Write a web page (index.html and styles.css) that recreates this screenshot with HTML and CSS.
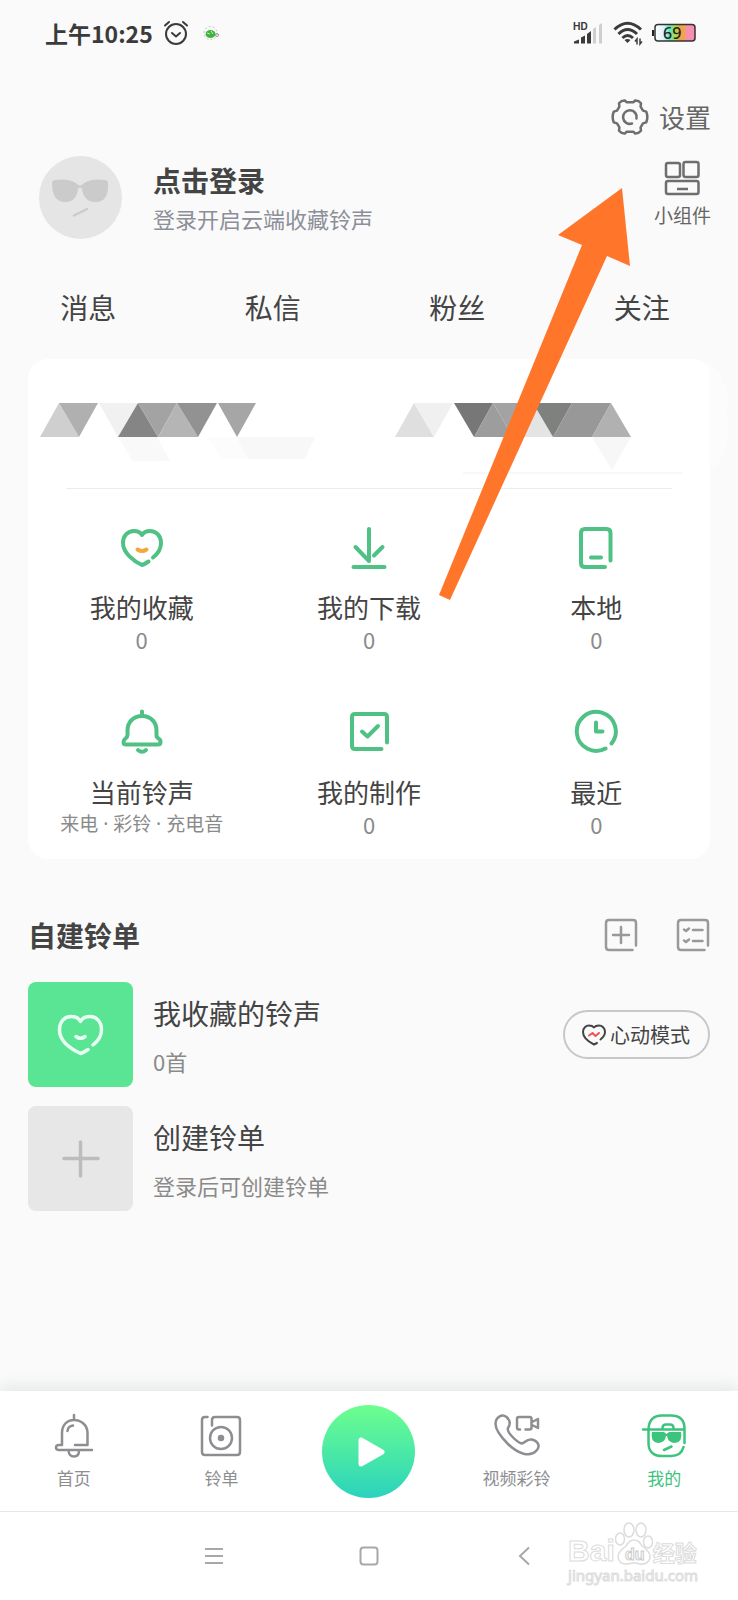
FILE: index.html
```html
<!DOCTYPE html>
<html lang="zh-CN">
<head>
<meta charset="utf-8">
<meta name="viewport" content="width=device-width, initial-scale=1">
<title>我的</title>
<link rel="stylesheet" href="styles.css">
</head>
<body>
<header class="status">
  <span class="status-time">上午10:25</span>
  <svg class="status-alarm" width="26" height="26" viewBox="0 0 26 26" fill="none" stroke="#3b3b3b" stroke-width="2" stroke-linecap="round" stroke-linejoin="round"><circle cx="13" cy="14" r="10"/><path d="M9 13l4 3.500 4-3.500M2 5.500l4-3.500M24 5.500l-4-3.500"/></svg>
  <svg class="status-app" width="16" height="16" viewBox="0 0 16 16"><circle cx="7.500" cy="8" r="6.500" fill="none" stroke="#b9c4b9" stroke-dasharray="2 2"/><ellipse cx="7.500" cy="9" rx="5" ry="4" fill="#3cb43c"/><path d="M4 8l3 1M8 6l2 3" stroke="#caf0ca"/><circle cx="14" cy="10" r="1.500" fill="none" stroke="#999"/></svg>
  <svg class="status-signal" width="30" height="24" viewBox="0 0 30 24"><text x="0" y="9" font-family="Inter, sans-serif" font-size="10" font-weight="700" fill="#3b3b3b">HD</text><path d="M1 22.500v-2l5-2v4zM8 22.500v-6l4-2v8zM14 22.500V13l4-3v12.500z" fill="#3b3b3b"/><path d="M20 22.500V8l3-2v16.500zM26 22.500V4l3-2v20.500z" fill="#cfcfcf"/></svg>
  <svg class="status-wifi" width="30" height="26" viewBox="0 0 30 26" fill="none" stroke="#3b3b3b" stroke-width="3"><path d="M1.500 9.500Q14.500-3 28 9.500M5.500 14Q14.500 5 24 14M9.500 18Q14.500 13 20 18"/><path d="M11.500 20q3-2 6 0l-3 3z" fill="#3b3b3b" stroke="none"/><path d="M24 24.500V19l-2 2.500M27 18.500V24l2-2.500" stroke-width="1.500"/></svg>
  <svg width="46" height="20" viewBox="0 0 46 20"><defs><linearGradient id="battery"><stop offset="0" stop-color="#fff"/><stop offset=".22" stop-color="#d9f3ff"/><stop offset=".36" stop-color="#5ee8c0"/><stop offset=".5" stop-color="#a6e04a"/><stop offset=".62" stop-color="#f0a53a"/><stop offset=".75" stop-color="#f3a060"/><stop offset=".8" stop-color="#f58fb4"/><stop offset="1" stop-color="#f58fb4"/></linearGradient></defs><rect x="4" y="1.500" width="40" height="16.500" rx="3" fill="url(#battery)" stroke="#333" stroke-width="1.500"/><path d="M3 7h-2v6h2z" fill="#222"/><text x="12" y="16" font-family="Noto Sans, sans-serif" font-size="16" font-weight="500" fill="#222">69</text></svg>
</header>

<main class="content">
  <div class="toolbar">
    <button class="settings">
      <svg width="40" height="40" viewBox="0 0 40 40" fill="none" stroke="#6e6e6e" stroke-width="2.500" stroke-linejoin="round" stroke-linecap="round"><path d="M16.500 5.200H23.500L25.200 3.400Q28.500 3.200 31 6.200L30.600 9.600L33 13.600L36.200 14.600Q38.500 20 36.200 25.400L33 26.400L30.600 30.400L31 33.800Q28.500 36.800 25.200 36.600L23.500 34.800H16.500L14.800 36.600Q11.500 36.800 9 33.800L9.400 30.400L7 26.400L3.800 25.400Q1.500 20 3.800 14.600L7 13.600L9.400 9.600L9 6.200Q11.500 3.200 14.800 3.400Z"/><path d="M26.500 21.500A6.800 6.800 0 1 0 22 26.500"/></svg>
      <span>设置</span>
    </button>
  </div>

  <section class="profile">
    <svg class="avatar" viewBox="0 0 83 83"><circle cx="41.500" cy="41.500" r="41.500" fill="#e5e5e5"/><path d="M13 27Q13 24 17 24Q29 22 37 27Q41 32 45 27Q53 22 65 24Q69 24 69 27Q70 45 58 46Q45 47 43 33Q41 30 39 33Q37 47 25 46Q13 45 13 27Z" fill="#cbcbcb"/><path d="M35 59.500L48 53" stroke="#cbcbcb" stroke-width="2.500" stroke-linecap="round"/></svg>
    <a class="login" href="#login">
      <strong class="login-title">点击登录</strong>
      <span class="login-note">登录开启云端收藏铃声</span>
    </a>
    <button class="widget">
      <svg width="36" height="36" viewBox="0 0 36 36" fill="none" stroke="#6e6e6e" stroke-width="2.500"><rect x="2" y="3" width="14" height="14" rx="2"/><rect x="19.500" y="2" width="15" height="15" rx="2"/><rect x="2" y="21" width="32.500" height="13" rx="2"/><path d="M13 29h11"/></svg>
      <span>小组件</span>
    </button>
  </section>

  <nav class="tabs">
    <a href="#messages">消息</a><a href="#chat">私信</a><a href="#fans">粉丝</a><a href="#following">关注</a>
  </nav>

  <section class="card">
    <svg class="mosaic" viewBox="0 0 682 85">
      <path d="M665-38Q688-46 694-22Q704-10 698 12Q706 30 690 62L665 72Z" fill="#fcfcfc"/>
      <path d="M640-44H662Q682-44 682-24V85H640Z" fill="#fff"/>
      <path d="M12 34L31 0L51 34Z" fill="#cfcfcf"/><path d="M31 0H70L51 34Z" fill="#b0b0b0"/>
      <path d="M71 0H110L90 34Z" fill="#f1f1f1"/><path d="M90 34L110 0L130 34Z" fill="#858585"/>
      <path d="M110 0H149L130 34Z" fill="#a3a3a3"/><path d="M130 34L149 0L170 34Z" fill="#b5b5b5"/>
      <path d="M149 0H189L170 34Z" fill="#929292"/><path d="M190 0H228L209 34Z" fill="#a6a6a6"/>
      <path d="M90 34H129L142 58H105Z" fill="#f9f9f9"/><path d="M208 34H287L277 56H220Z" fill="#f8f8f8"/><path d="M180 34H208L220 56H194Z" fill="#fcfcfc"/>
      <path d="M367 34L386 0L406 34Z" fill="#dfdfdf"/><path d="M386 0H425L406 34Z" fill="#f0f0f0"/>
      <path d="M426 0H465L446 34Z" fill="#777"/><path d="M446 34L465 0L485 34Z" fill="#9d9d9d"/>
      <path d="M465 0H505L485 34Z" fill="#a3a3a3"/><path d="M485 34L505 0L525 34Z" fill="#e4e4e4"/>
      <path d="M505 0H544L525 34Z" fill="#7e817e"/><path d="M525 34L544 0H583L564 34Z" fill="#989898"/>
      <path d="M564 34L583 0L603 34Z" fill="#b1b1b1"/><path d="M564 34H603L584 67Z" fill="#f7f7f7"/>
      <path d="M435 70H655" stroke="#f8f8f8" stroke-width="2"/>
    </svg>
    <hr class="rule">
    <ul class="grid">
      <li><a class="tile" href="#favorites">
        <svg class="icon" viewBox="0 0 48 48"><path d="M35 33.500C39.500 30 43 25.500 43 19C43 11.500 38 7 32 7C28.500 7 25.500 8.500 24 11C22.500 8.500 19.500 7 16 7C10 7 5 11.500 5 19C5 29 16 37.500 24 41Q27 40 30.500 37.500"/><path d="M19.500 25.500Q24 28.500 28.500 25.500" stroke="#f0a93f"/></svg>
        <span class="tile-name">我的收藏</span><span class="tile-count">0</span></a></li>
      <li><a class="tile" href="#downloads">
        <svg class="icon" viewBox="0 0 48 48"><path d="M8.500 43H39.500M24 5V37L10.500 23M37.500 23L29 31.500"/></svg>
        <span class="tile-name">我的下载</span><span class="tile-count">0</span></a></li>
      <li><a class="tile" href="#local">
        <svg class="icon" viewBox="0 0 48 48"><path d="M38.500 36.500V9Q38.500 5 34.500 5H13Q9 5 9 9V39Q9 43 13 43H33M19 33.500H29"/></svg>
        <span class="tile-name">本地</span><span class="tile-count">0</span></a></li>
      <li><a class="tile" href="#current">
        <svg class="icon" viewBox="0 0 48 48"><path d="M24 2.500V7M24 7C15 7 9.500 13.500 9.500 21.500V26Q9.500 28 7.500 29.500T5.500 33Q5.500 35.500 8 35.500H40Q42.500 35.500 42.500 33T40.500 29.500T38.500 26V21.500C38.500 13.500 33 7 24 7ZM20 41Q24 44.500 28 41"/></svg>
        <span class="tile-name">当前铃声</span><span class="tile-note">来电 · 彩铃 · 充电音</span></a></li>
      <li><a class="tile" href="#made">
        <svg class="icon" viewBox="0 0 48 48"><path d="M42 33.500V8Q42 5 39 5H10Q7 5 7 8V37Q7 40 10 40H36.500M17 22.500L22.500 27.500L33 17"/></svg>
        <span class="tile-name">我的制作</span><span class="tile-count">0</span></a></li>
      <li><a class="tile" href="#recent">
        <svg class="icon" viewBox="0 0 48 48"><path d="M39.500 34.500A19.500 19.500 0 1 0 33.500 39.500M24 13.500V22.500H30.500"/></svg>
        <span class="tile-name">最近</span><span class="tile-count">0</span></a></li>
    </ul>
  </section>

  <section class="lists">
    <div class="lists-head">
      <h2>自建铃单</h2>
      <button aria-label="新建铃单"><svg width="34" height="34" viewBox="0 0 34 34" fill="none" stroke="#999" stroke-width="2.500" stroke-linecap="round"><path d="M32 27.500V5Q32 2 29 2H5Q2 2 2 5V29Q2 32 5 32H28.500M9 17H25M17 9V25"/></svg></button>
      <button aria-label="管理铃单"><svg width="34" height="34" viewBox="0 0 34 34" fill="none" stroke="#999" stroke-width="2.500" stroke-linecap="round" stroke-linejoin="round"><path d="M32 27.500V5Q32 2 29 2H5Q2 2 2 5V29Q2 32 5 32H28.500M17 12H26.500M17 23H26.500M8 11.500L10 13L13 10.500M8 22.500L10 24L13 21.500"/></svg></button>
    </div>
    <div class="entry">
      <svg class="cover cover-green" viewBox="0 0 105 105" fill="none" stroke="#e9fff2" stroke-width="3.500" stroke-linecap="round" stroke-linejoin="round"><path d="M65 63C70 59 73.500 54 73.500 48C73.500 39 68 34.500 62 34.500C57.500 34.500 54 36.500 52.500 39.500C51 36.500 47.500 34.500 43 34.500C37 34.500 31.500 39 31.500 48C31.500 59 43 67 52.500 71.500Q56 70.500 60 67.500M48 54.500Q52.500 58 57 54.500"/></svg>
      <a class="entry-text" href="#liked"><span class="entry-title">我收藏的铃声</span><span class="entry-note">0首</span></a>
      <button class="pill"><svg width="24" height="22" viewBox="0 0 24 22" fill="none" stroke="#444" stroke-width="2" stroke-linecap="round" stroke-linejoin="round"><path d="M18.500 15.500C21 13.500 23 11 23 8C23 4 20 1.500 17 1.500Q13.500 1.500 12 3.500Q10.500 1.500 7 1.500C4 1.500 1 4 1 8C1 14 7 18 12 20.500L15 19"/><path d="M7 11.500L10.500 9L13.500 12L17 9" stroke="#ef5350"/></svg><span>心动模式</span></button>
    </div>
    <div class="entry">
      <svg class="cover cover-gray" viewBox="0 0 105 105" stroke="#bcbcbc" stroke-width="3.500" stroke-linecap="round"><path d="M36 52.500H70M52.500 36V70"/></svg>
      <a class="entry-text" href="#create"><span class="entry-title">创建铃单</span><span class="entry-note">登录后可创建铃单</span></a>
    </div>
  </section>
</main>

<nav class="tabbar">
  <a href="#home"><svg class="tab-icon" viewBox="0 0 48 48"><path d="M24 3V8M12 33V21C12 13 17 8 24 8S37.500 13 37.500 21V33H25M12 33H9Q6 33 6 35.500T9 38H42M18.500 38.500Q19 44.500 24 44.500T29 38.500M17.500 19Q18 14 23 13.500"/></svg><span>首页</span></a>
  <a href="#rings"><svg class="tab-icon" viewBox="0 0 48 48"><path d="M10.500 5H8Q5 5 5 8V40Q5 43 8 43H40Q43 43 43 40V8Q43 5 40 5H18Q15 5 15 8V13.500"/><circle cx="24" cy="26" r="11"/><circle cx="24" cy="26" r="2" fill="#8e8e92"/></svg><span>铃单</span></a>
  <button class="play" aria-label="播放"><svg width="93" height="93" viewBox="0 0 93 93"><path d="M39 35V59L60 47Z" fill="#fff" stroke="#fff" stroke-width="5" stroke-linejoin="round"/></svg></button>
  <a href="#video"><svg class="tab-icon" viewBox="0 0 48 48"><path d="M2.500 12C2.500 5 9 1.500 13.500 5C18 9 17 13 15 16C13.500 20 23 29.500 28.500 31.500C32 31.500 33 26.500 39 27.500C46 29.500 47.500 35 43 39C37 45.500 25 42 15 32C7 24 2.500 18 2.500 12Z"/><path d="M27 17.500H26Q24 17.500 24 15.500V7Q24 5 26 5H36.500Q38.500 5 38.500 7V15.500Q38.500 17.500 36.500 17.500H32.500M40 9.500L45 7V16L40 13.500"/></svg><span>视频彩铃</span></a>
  <a class="active" href="#mine"><svg class="tab-icon" viewBox="0 0 48 48"><path d="M8.500 17C9 8 14 3.500 22 3.500H31C40 3.500 44.500 8 44.500 17V31M43.500 35C42 41 37.500 44 31 44H22C13 44 8.500 39 8.500 31V17M3 17.500H44M22.500 16Q22.500 12.500 26 12.500H30Q33.500 12.500 33.500 16"/><path d="M12 20H24L26.500 22L29 20H41Q43 30 35 31Q28 31 27 24H26Q25 31 18 31Q10 30 12 20Z" fill="#3cc47c" stroke="none"/><path d="M24 38L31.500 34.500"/></svg><span>我的</span></a>
</nav>

<footer class="system">
  <button aria-label="菜单"><svg width="40" height="40" viewBox="0 0 40 40"><path d="M11 13H29M11 20H29M11 27H29"/></svg></button>
  <button aria-label="桌面"><svg width="40" height="40" viewBox="0 0 40 40"><rect x="11.500" y="11.500" width="17" height="17" rx="3"/></svg></button>
  <button aria-label="返回"><svg width="40" height="40" viewBox="0 0 40 40"><path d="M25 11.500L16 20L25 28.500"/></svg></button>
  <div class="mark">
    <div class="mark-logo">
      <span class="mark-latin">Bai</span>
      <svg width="38" height="44" viewBox="0 0 38 44" fill="#fff" stroke="#dcdcdc" stroke-width="1.500"><ellipse cx="14" cy="8" rx="5" ry="7"/><ellipse cx="26" cy="8" rx="5" ry="7"/><ellipse cx="5" cy="17" rx="4.500" ry="6"/><ellipse cx="33" cy="20" rx="4.500" ry="6"/><path d="M19 18Q24 18 27 24Q36 30 35 36Q33 43 25 42Q19 40 13 42Q4 43 3 35Q3 30 11 24Q14 18 19 18Z"/><text class="mark-du" x="10" y="38">du</text></svg>
      <span class="mark-cjk">经验</span>
    </div>
    <span class="mark-url">jingyan.baidu.com</span>
  </div>
</footer>

<svg class="pointer" width="192" height="414" viewBox="0 0 192 414"><path d="M184 1L192 79L169 69L12 413L1 408L144 58L120 48Z" fill="#ff762b"/></svg>
</body>
</html>
```
FILE: styles.css
```css
* { box-sizing: border-box; }

body {
  position: relative;
  display: flex;
  flex-direction: column;
  min-height: 100vh;
  margin: 0;
  background: #fafafa;
  color: #444;
  font-family: "Noto Sans CJK SC", sans-serif;
}

a { color: inherit; text-decoration: none; }
button { padding: 0; border: 0; background: none; color: inherit; font: inherit; }
svg { display: block; flex: none; }

.status {
  display: flex;
  align-items: center;
  height: 68px;
  padding: 0 41px 2px 45px;
}
.status-time { font-size: 23px; font-weight: 700; line-height: 32px; color: #3b3b3b; }
.status-alarm { margin-left: 10px; }
.status-app { margin-left: 14px; }
.status-signal { margin-left: auto; }
.status-wifi { margin: 0 8px 0 10px; }

.content { flex: 1; }

.toolbar { display: flex; justify-content: flex-end; padding: 29px 27px 0; }
.settings {
  display: flex;
  align-items: center;
  gap: 9px;
  color: #666;
  font-size: 26px;
  line-height: 38px;
}

.profile {
  display: flex;
  align-items: center;
  padding: 19px 27px 0 39px;
}
.avatar { width: 83px; }
.login { display: flex; flex: 1; flex-direction: column; gap: 5px; margin-left: 31px; }
.login-title { font-size: 28px; line-height: 36px; }
.login-note { color: #8c8f98; font-size: 22px; line-height: 30px; }
.widget {
  display: flex;
  flex-direction: column;
  align-items: center;
  align-self: flex-start;
  gap: 6px;
  padding-top: 4px;
  color: #666;
  font-size: 19px;
  line-height: 26px;
}

.tabs {
  display: grid;
  grid-template-columns: repeat(4, 1fr);
  margin-top: 48px;
  font-size: 28px;
  line-height: 40px;
  text-align: center;
}
.tabs a { padding-right: 8px; }

.card {
  margin: 32px 28px 0;
  padding: 44px 0 21px;
  border-radius: 20px;
  background: #fff;
}
.mosaic { width: 100%; overflow: visible; }
.rule { height: 1px; margin: 0 38px 35px; border: 0; background: #ececec; }
.grid {
  display: grid;
  grid-template-columns: repeat(3, 1fr);
  row-gap: 56px;
  margin: 0;
  padding: 0;
  list-style: none;
}
.tile { display: flex; flex-direction: column; align-items: center; }
.icon {
  width: 48px;
  margin-bottom: 17px;
  fill: none;
  stroke: #4fc184;
  stroke-width: 4;
  stroke-linecap: round;
  stroke-linejoin: round;
}
.tile-name { font-size: 26px; line-height: 36px; }
.tile-count { color: #8a8a8a; font-size: 22px; line-height: 28px; }
.tile-note {
  color: #8a8a8a;
  font-family: "Noto Sans", "Noto Sans CJK SC", sans-serif;
  font-size: 19px;
  line-height: 28px;
  white-space: nowrap;
}

.lists { margin-top: 56px; padding: 0 28px; }
.lists-head { display: flex; align-items: center; gap: 38px; margin-bottom: 27px; }
.lists-head h2 { flex: 1; margin: 0; font-size: 28px; line-height: 40px; }
.entry { display: flex; align-items: center; margin-bottom: 19px; }
.cover { width: 105px; border-radius: 8px; }
.cover-green { background: #5ae594; }
.cover-gray { background: #e7e7e7; }
.entry-text { display: flex; flex: 1; flex-direction: column; gap: 12px; margin-left: 20px; }
.entry-title { font-size: 28px; line-height: 40px; }
.entry-note { color: #8a8a8a; font-size: 22px; line-height: 32px; }
.pill {
  display: flex;
  align-items: center;
  gap: 4px;
  padding: 0 18px 0 17px;
  border: 2px solid #c8c8c8;
  border-radius: 25px;
  font-size: 20px;
  line-height: 45px;
}

.tabbar {
  display: grid;
  grid-template-columns: repeat(5, 1fr);
  justify-items: center;
  align-items: center;
  height: 121px;
  border-bottom: 1px solid #e6e8e8;
  background: #fff;
  box-shadow: 0 -5px 14px #e3e9e7;
  color: #8e8e92;
  font-size: 17px;
  line-height: 24px;
}
.tabbar a { display: flex; flex-direction: column; align-items: center; gap: 6px; }
.tabbar .active { color: #3cc47c; }
.tab-icon {
  width: 48px;
  fill: none;
  stroke: currentColor;
  stroke-width: 2.5;
  stroke-linecap: round;
  stroke-linejoin: round;
}
.play { border-radius: 50%; background: linear-gradient(#6dff8e, #2ad3bd); }

.system {
  position: relative;
  display: flex;
  justify-content: center;
  align-items: center;
  gap: 115px;
  height: 88px;
  background: #fff;
  fill: none;
  stroke: #a8a8a8;
  stroke-width: 2;
}
.mark {
  position: absolute;
  right: 40px;
  bottom: 16px;
  color: #fff;
  -webkit-text-stroke: 1px #dcdcdc;
}
.mark-logo { display: flex; align-items: flex-end; font-weight: 700; }
.mark-latin { font-family: "Liberation Sans", sans-serif; font-size: 30px; line-height: 30px; }
.mark-du { font-family: "Liberation Sans", sans-serif; font-size: 16px; stroke: #ccc; stroke-width: 1; }
.mark-cjk { font-size: 22px; line-height: 30px; }
.mark-url { display: block; font-family: "Noto Sans", sans-serif; font-size: 15px; line-height: 18px; }

.pointer { position: absolute; top: 187px; right: 108px; pointer-events: none; }
```
